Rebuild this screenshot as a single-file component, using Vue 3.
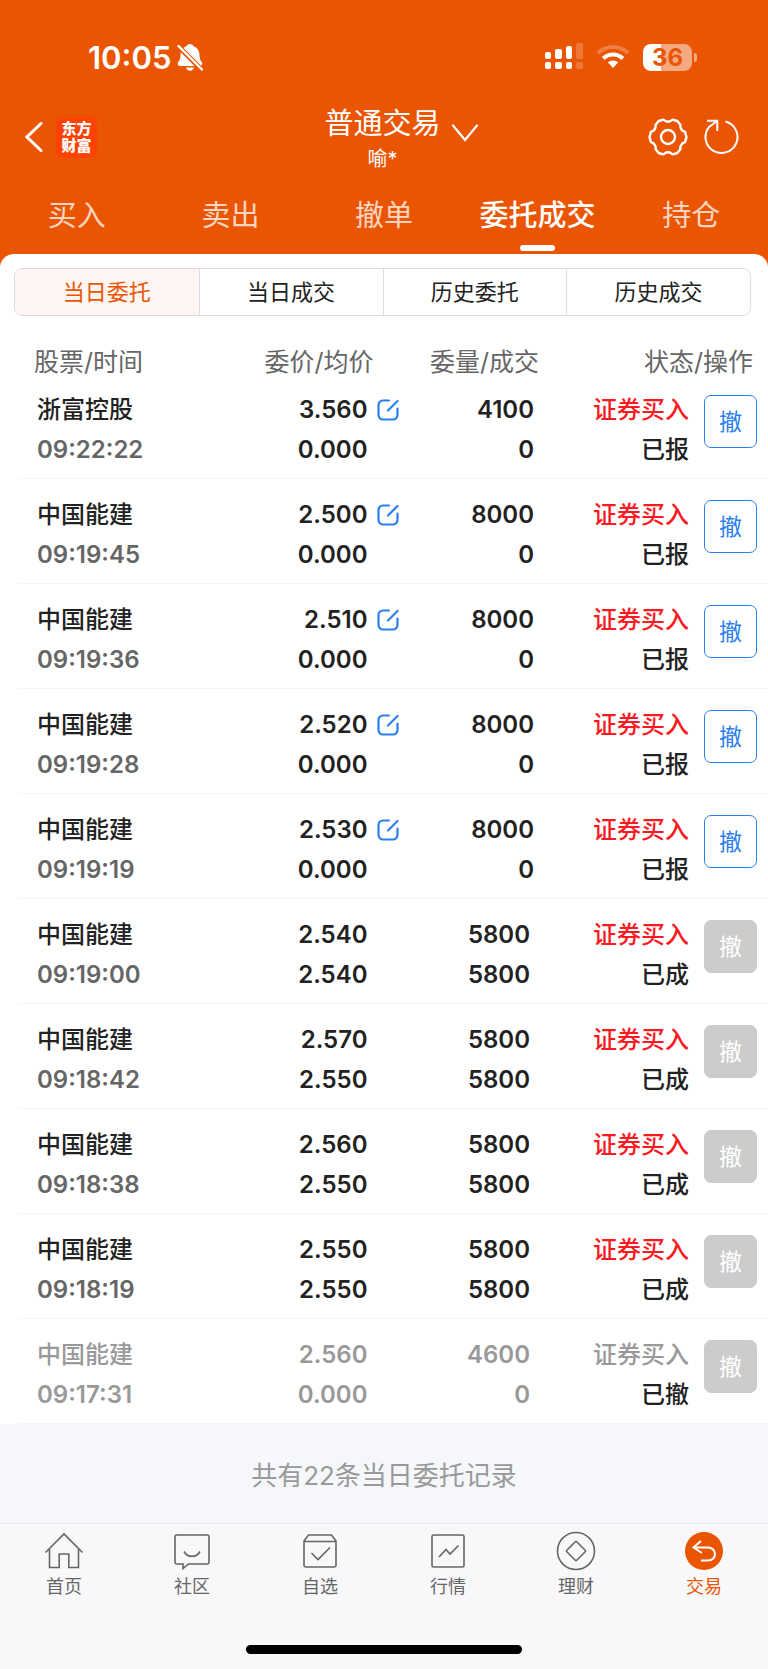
<template>
  <div class="app">
    <header class="top">
      <div class="status-bar">
        <div class="clock">
          <span>10:05</span>
          <svg class="icon-bell" viewBox="0 0 26 28" fill="#fff">
            <path d="M13 1c1.700 0 3 .900 3.300 2.300 4.200 1.300 6 4.600 6.200 8.400.2 4.800 1.100 5.900 2.300 7.400.8 1.100.3 3.900-1.300 3.900H2.500C.9 23 .4 20.200 1.200 19.100c1.200-1.500 2.100-2.600 2.300-7.400C3.700 7.900 5.500 4.600 9.700 3.300 10 1.900 11.300 1 13 1z" />
            <path d="M9 24.500h8c-.4 2-2 3.200-4 3.200s-3.600-1.200-4-3.200z" />
            <path d="M0 2l26 26" stroke="#ea5504" stroke-width="5" />
            <path d="M1.500 3l23.500 23.500" stroke="#fff" stroke-width="2.400" stroke-linecap="round" />
          </svg>
        </div>
        <div class="status-icons">
          <svg class="icon-signal" viewBox="0 0 38 28" fill="#fff">
            <rect x="0" y="9" width="6" height="7" rx="2" />
            <rect x="10" y="6" width="7" height="10" rx="2" />
            <rect x="21" y="3" width="6" height="13" rx="2" />
            <rect x="31" y="0" width="7" height="16" rx="2" opacity=".2" />
            <rect x="0" y="19" width="6" height="7" rx="2" />
            <rect x="10" y="19" width="7" height="7" rx="2" />
            <rect x="21" y="19" width="6" height="7" rx="2" />
            <rect x="31" y="19" width="7" height="7" rx="2" opacity=".2" />
          </svg>
          <svg class="icon-wifi" viewBox="0 0 34 26" fill="none" stroke="#fff">
            <path d="M2 9a21.500 21.500 0 0 1 30 0" stroke-width="4" opacity=".25" />
            <path d="M7.200 14.500a14 14 0 0 1 19.600 0" stroke-width="4" />
            <path d="M17 16.500c2 0 3.600.7 5 1.900L17 24l-5-5.600c1.400-1.200 3-1.900 5-1.900z" fill="#fff" stroke="none" />
          </svg>
          <div class="battery">
            <span class="battery-body">36</span>
            <span class="battery-cap"></span>
          </div>
        </div>
      </div>

      <div class="title-bar">
        <div class="title-left">
          <button class="icon-btn" type="button" aria-label="返回">
            <svg class="icon-back" viewBox="0 0 18 30" fill="none" stroke="#fff" stroke-width="3" stroke-linecap="round">
              <path d="M16 1.500L2 15l14 13.500" />
            </svg>
          </button>
          <span class="logo"><span>东方</span><span>财富</span></span>
        </div>
        <div class="title-center">
          <button class="account" type="button">
            <span>普通交易</span>
            <svg class="icon-down" viewBox="0 0 28 18" fill="none" stroke="#fff" stroke-width="2.200" stroke-linecap="round">
              <path d="M2 1.500l12 14.500L26 1.500" />
            </svg>
          </button>
          <span class="user">喻*</span>
        </div>
        <div class="title-right">
          <button class="icon-btn" type="button" aria-label="设置">
            <svg class="icon-gear" viewBox="0 0 40 40" fill="none" stroke="#fff" stroke-width="2.400" stroke-linejoin="round">
              <path d="M37 14.900L38.500 20L37 25.100Q31.700 26.800 32.400 32.300L29.300 36L24.600 37.300Q20 33.400 15.400 37.300L10.700 36L7.600 32.300Q8.300 26.800 3 25.100L1.500 20L3 14.900Q8.300 13.200 7.600 7.700L10.700 4L15.400 2.700Q20 6.600 24.600 2.700L29.300 4L32.400 7.700Q31.700 13.200 37 14.900z" />
              <circle cx="20" cy="20" r="7" />
            </svg>
          </button>
          <button class="icon-btn" type="button" aria-label="刷新">
            <svg class="icon-refresh" viewBox="0 0 36 36" fill="none" stroke="#fff" stroke-width="2">
              <path d="M21.500 2.500A16 16 0 1 1 5 8L12.500 2.500" />
              <path d="M3 1.800h10.300v10.200" />
            </svg>
          </button>
        </div>
      </div>

      <nav class="tabs">
        <a v-for="tab in tabs" :key="tab" href="#" class="tab" :class="{ active: tab === activeTab }" @click.prevent="activeTab = tab">
          {{ tab }}
        </a>
      </nav>
    </header>

    <main class="panel">
      <div class="segments">
        <button v-for="item in segments" :key="item" type="button" class="segment" :class="{ active: item === activeSegment }" @click="activeSegment = item">
          {{ item }}
        </button>
      </div>

      <table class="orders">
        <colgroup>
          <col class="col-name">
          <col class="col-price">
          <col class="col-volume">
          <col class="col-status">
          <col class="col-action">
        </colgroup>
        <thead>
          <tr>
            <th class="name">股票/时间</th>
            <th class="price-head">委价/均价</th>
            <th class="volume-head">委量/成交</th>
            <th class="status-head" colspan="2">状态/操作</th>
          </tr>
        </thead>
        <tbody>
          <tr v-for="order in orders" :key="order.time" :class="order.state">
            <td class="name">
              <span class="line">{{ order.name }}</span>
              <span class="line time">{{ order.time }}</span>
            </td>
            <td>
              <div class="price">
                <span class="line">{{ order.price }}</span>
                <button v-if="order.state === 'open'" class="icon-btn" type="button" aria-label="改价">
                  <svg class="icon-edit" viewBox="0 0 22 22" fill="none" stroke="#2b7fee" stroke-width="2.200" stroke-linecap="round">
                    <path d="M12 1.500H6A4.500 4.500 0 0 0 1.500 6v10A4.500 4.500 0 0 0 6 20.500h10a4.500 4.500 0 0 0 4.500-4.500V9.500" />
                    <path d="M11 11.500l9.500-9.500" />
                  </svg>
                </button>
                <span class="line avg">{{ order.avg }}</span>
              </div>
            </td>
            <td class="volume">
              <span class="line">{{ order.volume }}</span>
              <span class="line">{{ order.filled }}</span>
            </td>
            <td class="status">
              <span class="line side">证券买入</span>
              <span class="line result">{{ order.status }}</span>
            </td>
            <td class="action">
              <button class="cancel" type="button" :disabled="order.state !== 'open'">撤</button>
            </td>
          </tr>
        </tbody>
      </table>
    </main>

    <p class="summary">共有22条当日委托记录</p>

    <footer class="bottom">
      <nav class="bottom-nav">
        <a href="#" class="nav-item">
          <svg class="nav-icon" viewBox="0 0 40 40">
            <path d="M1.500 21.500L20 3l18.500 18.500M5.500 18v18.500h9.700V23h9.600v13.500h9.700V18" />
          </svg>
          <span>首页</span>
        </a>
        <a href="#" class="nav-item">
          <svg class="nav-icon" viewBox="0 0 40 40">
            <path d="M5 4h30a2 2 0 0 1 2 2v25a2 2 0 0 1-2 2H16.500L11 37.500V33H5a2 2 0 0 1-2-2V6a2 2 0 0 1 2-2z" />
            <path d="M12 20.500c3.500 6.500 12.500 6.500 16 0" />
          </svg>
          <span>社区</span>
        </a>
        <a href="#" class="nav-item">
          <svg class="nav-icon" viewBox="0 0 40 40">
            <path d="M4 10l4.500-6h23l4.500 6v24a2 2 0 0 1-2 2H6a2 2 0 0 1-2-2V10zM4 10.500h32" />
            <path d="M11.500 22l6.500 6.500L30 16.500" />
          </svg>
          <span>自选</span>
        </a>
        <a href="#" class="nav-item">
          <svg class="nav-icon" viewBox="0 0 40 40">
            <rect x="4" y="4" width="32" height="32" rx="1.500" />
            <path d="M11 26l7-7.500 4 4.500 8.500-8.500" />
          </svg>
          <span>行情</span>
        </a>
        <a href="#" class="nav-item">
          <svg class="nav-icon" viewBox="0 0 40 40">
            <circle cx="20" cy="20" r="18.500" />
            <rect x="13" y="13" width="14" height="14" rx="1" transform="rotate(45 20 20)" />
          </svg>
          <span>理财</span>
        </a>
        <a href="#" class="nav-item active">
          <svg class="nav-icon" viewBox="0 0 40 40">
            <circle class="disc" cx="20" cy="20" r="19" />
            <path class="arrow" d="M17 10l-7.500 6.500L18 22M10 16.500h14c9 0 9.500 13 0 13h-7" />
          </svg>
          <span>交易</span>
        </a>
      </nav>
      <div class="home-bar"></div>
    </footer>
  </div>
</template>

<script setup>
import { ref } from 'vue';

const tabs = ['买入', '卖出', '撤单', '委托成交', '持仓'];
const activeTab = ref('委托成交');

const segments = ['当日委托', '当日成交', '历史委托', '历史成交'];
const activeSegment = ref('当日委托');

// state: open = 可撤, done = 已成交, revoked = 已撤单
const orders = ref([
  { name: '浙富控股', time: '09:22:22', price: '3.560', avg: '0.000', volume: 4100, filled: 0, status: '已报', state: 'open' },
  { name: '中国能建', time: '09:19:45', price: '2.500', avg: '0.000', volume: 8000, filled: 0, status: '已报', state: 'open' },
  { name: '中国能建', time: '09:19:36', price: '2.510', avg: '0.000', volume: 8000, filled: 0, status: '已报', state: 'open' },
  { name: '中国能建', time: '09:19:28', price: '2.520', avg: '0.000', volume: 8000, filled: 0, status: '已报', state: 'open' },
  { name: '中国能建', time: '09:19:19', price: '2.530', avg: '0.000', volume: 8000, filled: 0, status: '已报', state: 'open' },
  { name: '中国能建', time: '09:19:00', price: '2.540', avg: '2.540', volume: 5800, filled: 5800, status: '已成', state: 'done' },
  { name: '中国能建', time: '09:18:42', price: '2.570', avg: '2.550', volume: 5800, filled: 5800, status: '已成', state: 'done' },
  { name: '中国能建', time: '09:18:38', price: '2.560', avg: '2.550', volume: 5800, filled: 5800, status: '已成', state: 'done' },
  { name: '中国能建', time: '09:18:19', price: '2.550', avg: '2.550', volume: 5800, filled: 5800, status: '已成', state: 'done' },
  { name: '中国能建', time: '09:17:31', price: '2.560', avg: '0.000', volume: 4600, filled: 0, status: '已撤', state: 'revoked' }
]);
</script>

<style>
body {
  background: #f8f8fb;
}
</style>

<style scoped>
.app {
  font-family: Inter, "Noto Sans CJK SC", sans-serif;
  color: #222;
  background: #f6f7fa;
}

button {
  padding: 0;
  border: none;
  background: none;
  color: inherit;
  font: inherit;
  cursor: pointer;
}

a {
  color: inherit;
  text-decoration: none;
}

svg {
  display: block;
}

.icon-btn {
  display: block;
}

.top {
  padding-top: 36px;
  background: #ea5504;
  color: #fff;
}

.status-bar {
  display: flex;
  justify-content: space-between;
  align-items: center;
  height: 42px;
  padding: 0 71px 0 88px;
}

.clock {
  display: flex;
  align-items: center;
  gap: 6px;
  font-size: 31px;
  font-weight: 600;
}

.icon-bell {
  width: 26px;
  height: 28px;
}

.status-icons {
  display: flex;
  align-items: center;
}

.icon-signal {
  width: 38px;
  height: 28px;
}

.icon-wifi {
  width: 34px;
  height: 26px;
  margin: 0 13px;
}

.battery {
  display: flex;
  align-items: center;
  gap: 2px;
}

.battery-body {
  width: 49px;
  border-radius: 8px;
  background: linear-gradient(90deg, #fff 37%, #f4a981 37%);
  color: #ea5504;
  font-size: 24px;
  font-weight: 700;
  line-height: 27px;
  text-align: center;
}

.battery-cap {
  width: 3px;
  height: 9px;
  border-radius: 0 4px 4px 0;
  background: #f4a981;
}

.title-bar {
  display: grid;
  grid-template-columns: 1fr auto 1fr;
  align-items: center;
  height: 108px;
  padding: 0 28px 0 25px;
}

.title-left {
  display: flex;
  align-items: center;
  gap: 13px;
  padding-top: 10px;
}

.icon-back {
  width: 18px;
  height: 30px;
}

.logo {
  display: flex;
  flex-direction: column;
  justify-content: center;
  width: 41px;
  height: 41px;
  border-radius: 7px;
  background: #ff4200;
  font-size: 15px;
  font-weight: 900;
  line-height: 17px;
  text-align: center;
}

.title-center {
  display: flex;
  flex-direction: column;
  align-items: center;
  padding-top: 14px;
}

.account {
  display: flex;
  align-items: center;
  gap: 10px;
  padding-left: 38px;
  font-size: 29px;
  line-height: 40px;
}

.icon-down {
  width: 28px;
  height: 18px;
  margin-top: 18px;
}

.user {
  font-size: 20px;
  line-height: 30px;
}

.title-right {
  display: flex;
  justify-content: flex-end;
  align-items: center;
  gap: 16px;
  padding-top: 10px;
}

.icon-gear {
  width: 40px;
  height: 40px;
}

.icon-refresh {
  width: 36px;
  height: 36px;
}

.tabs {
  display: grid;
  grid-template-columns: repeat(5, 1fr);
  height: 80px;
}

.tab {
  display: flex;
  flex-direction: column;
  align-items: center;
  padding-top: 10px;
  color: #fbd5c0;
  font-size: 29px;
  line-height: 40px;
}

.tab.active {
  color: #fff;
  font-weight: 500;
}

.tab.active::after {
  content: "";
  width: 35px;
  height: 6px;
  margin-top: 9px;
  border-radius: 3px;
  background: #fff;
}

.panel {
  margin-top: -12px;
  padding-top: 14px;
  border-radius: 14px 14px 0 0;
  background: #fff;
}

.segments {
  display: grid;
  grid-template-columns: repeat(4, 1fr);
  margin: 0 17px 0 14px;
  border: 1px solid #dcdde4;
  border-radius: 8px;
  overflow: hidden;
}

.segment {
  height: 46px;
  padding-bottom: 4px;
  font-size: 22px;
}

.segment + .segment {
  border-left: 1px solid #dcdde4;
}

.segment.active {
  background: #fff5f2;
  color: #ea5504;
}

.orders {
  width: calc(100% - 18px);
  margin-left: 18px;
  border-collapse: collapse;
  table-layout: fixed;
  font-size: 24px;
  font-weight: 500;
}

.col-name {
  width: 26%;
}

.col-price {
  width: 25%;
}

.col-volume {
  width: 19%;
}

.col-status {
  width: 20%;
}

.col-action {
  width: 10%;
}

th {
  padding: 34px 0 0;
  color: #666;
  font-size: 25px;
  font-weight: 400;
  line-height: 24px;
  text-align: right;
}

th.name {
  padding-left: 16px;
  text-align: left;
}

.price-head {
  padding-right: 27px;
}

.volume-head {
  padding-right: 4px;
}

.status-head {
  padding-right: 15px;
}

tbody tr {
  border-bottom: 1px solid #f4f4f5;
}

td {
  padding: 16px 0 8px;
  text-align: right;
  vertical-align: top;
}

td.name {
  padding-left: 19px;
  text-align: left;
}

.line {
  display: block;
  line-height: 40px;
}

.time {
  color: #666;
}

.time,
.price,
.volume {
  font-weight: 600;
}

.price {
  display: grid;
  grid-template-columns: 1fr 22px;
  column-gap: 9px;
  align-items: center;
  padding-right: 2px;
}

.avg {
  grid-column: 1;
}

.icon-edit {
  width: 22px;
  height: 22px;
}

.volume {
  padding-right: 9px;
}

.done .volume,
.revoked .volume {
  padding-right: 13px;
}

.status {
  padding-right: 4px;
}

.side {
  color: #fb1a1f;
}

.revoked,
.revoked .time,
.revoked .side {
  color: #999;
}

.revoked .result {
  color: #222;
}

td.action {
  padding: 21px 11px 0 0;
}

.cancel {
  width: 53px;
  height: 53px;
  padding-bottom: 4px;
  border: 1px solid #2b7fee;
  border-radius: 7px;
  color: #2b7fee;
  font-size: 23px;
  font-weight: 400;
}

.cancel:disabled {
  border-color: #ccc;
  background: #ccc;
  color: #fff;
}

.summary {
  margin: 0;
  padding: 34px 0 29px;
  color: #999;
  font-size: 26px;
  line-height: 36px;
  text-align: center;
}

.bottom {
  padding-bottom: 14px;
  border-top: 1px solid #e8e8ee;
  background: #f8f8fb;
}

.bottom-nav {
  display: grid;
  grid-template-columns: repeat(6, 1fr);
  color: #666;
}

.nav-item {
  display: flex;
  flex-direction: column;
  align-items: center;
  padding-top: 7px;
  font-size: 18px;
  line-height: 32px;
}

.nav-item.active {
  color: #ea5504;
}

.nav-icon {
  width: 40px;
  height: 40px;
  fill: none;
  stroke: #666;
  stroke-width: 1.6;
}

.nav-icon .disc {
  fill: #ea5504;
  stroke: none;
}

.nav-icon .arrow {
  stroke: #fff;
  stroke-width: 2;
}

.home-bar {
  width: 36%;
  height: 9px;
  margin: 42px auto 0;
  border-radius: 5px;
  background: #000;
}
</style>
